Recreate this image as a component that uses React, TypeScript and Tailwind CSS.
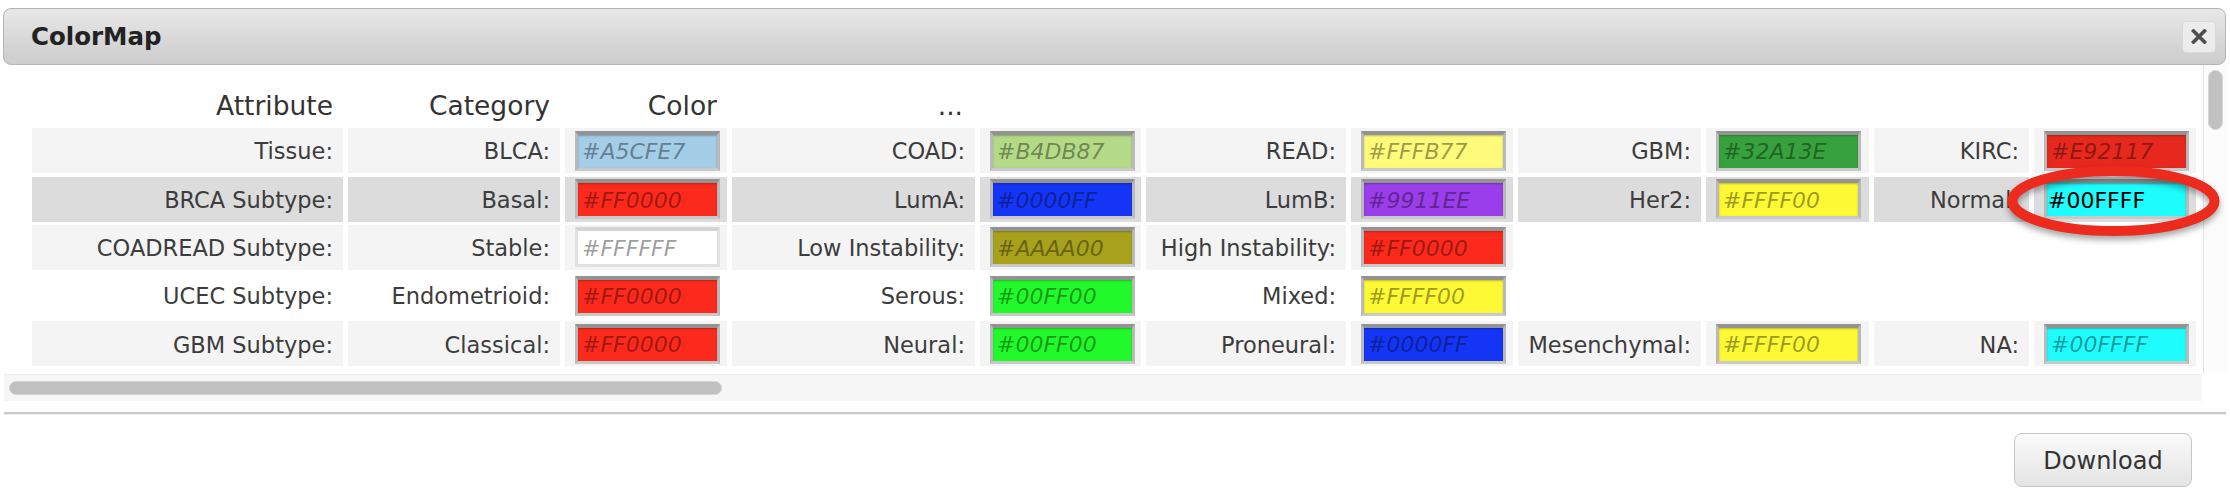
import React from "react";

type Pair = { label: string; hex: string; fill: string; typed?: boolean };
type Row = { attr: string; bg: "light" | "dark" | "none"; pairs: Pair[] };

const RED = "#fc2a1c";
const BLUE = "#1535f6";
const GREEN = "#22f92b";
const YELLOW = "#fdf934";
const CYAN = "#1ffcfd";

const rows: Row[] = [
  {
    attr: "Tissue:",
    bg: "light",
    pairs: [
      { label: "BLCA:", hex: "#A5CFE7", fill: "#a4cde8" },
      { label: "COAD:", hex: "#B4DB87", fill: "#b4da88" },
      { label: "READ:", hex: "#FFFB77", fill: "#fefb7a" },
      { label: "GBM:", hex: "#32A13E", fill: "#37a13e" },
      { label: "KIRC:", hex: "#E92117", fill: "#e6281e" },
    ],
  },
  {
    attr: "BRCA Subtype:",
    bg: "dark",
    pairs: [
      { label: "Basal:", hex: "#FF0000", fill: RED },
      { label: "LumA:", hex: "#0000FF", fill: BLUE },
      { label: "LumB:", hex: "#9911EE", fill: "#9a3deb" },
      { label: "Her2:", hex: "#FFFF00", fill: YELLOW },
      { label: "Normal:", hex: "#00FFFF", fill: CYAN, typed: true },
    ],
  },
  {
    attr: "COADREAD Subtype:",
    bg: "light",
    pairs: [
      { label: "Stable:", hex: "#FFFFFF", fill: "#ffffff" },
      { label: "Low Instability:", hex: "#AAAA00", fill: "#a8a11c" },
      { label: "High Instability:", hex: "#FF0000", fill: RED },
    ],
  },
  {
    attr: "UCEC Subtype:",
    bg: "none",
    pairs: [
      { label: "Endometrioid:", hex: "#FF0000", fill: RED },
      { label: "Serous:", hex: "#00FF00", fill: GREEN },
      { label: "Mixed:", hex: "#FFFF00", fill: YELLOW },
    ],
  },
  {
    attr: "GBM Subtype:",
    bg: "light",
    pairs: [
      { label: "Classical:", hex: "#FF0000", fill: RED },
      { label: "Neural:", hex: "#00FF00", fill: GREEN },
      { label: "Proneural:", hex: "#0000FF", fill: BLUE },
      { label: "Mesenchymal:", hex: "#FFFF00", fill: YELLOW },
      { label: "NA:", hex: "#00FFFF", fill: CYAN },
    ],
  },
];

const bgClass: Record<Row["bg"], string> = {
  light: "bg-[#f4f4f4]",
  dark: "bg-[#dcdcdc]",
  none: "",
};

const GRID =
  "grid grid-cols-[311px_212px_162px_243px_161px_200px_162px_183px_163px_155px_162px] gap-x-[5px]";

function LabelCell({ text, bg }: { text: string; bg: string }) {
  return (
    <div className={`${bg} flex items-center justify-end pr-[10px] pt-[3px] text-[22.5px] text-[#3c3c3c] whitespace-nowrap`}>
      {text}
    </div>
  );
}

function ColorCell({ pair, bg }: { pair: Pair; bg: string }) {
  const white = pair.fill === "#ffffff";
  const border = white
    ? "border-[3px] border-[#e2e2e2] border-t-[4px] border-t-[#d4d4d4]"
    : "border-[3px] border-[#b9b9b9] border-t-[4px] border-t-[#939393] border-b-[#c9c9c9] shadow-[inset_0_1px_2px_rgba(0,0,0,0.25)]";
  return (
    <div className={`${bg} flex items-center pl-[10px]`}>
      <div
        className={`w-[145px] h-[40px] ${border} flex items-center overflow-hidden`}
        style={{ backgroundColor: pair.fill }}
      >
        {pair.typed ? (
          <span className="pl-[1px] pt-[2px] text-[22px] leading-none text-black">{pair.hex}</span>
        ) : (
          <span className="pl-[4px] pt-[2px] text-[22px] leading-none italic text-black/40">{pair.hex}</span>
        )}
      </div>
    </div>
  );
}

export default function App() {
  return (
    <div
      className="relative w-[2230px] h-[498px] bg-white overflow-hidden"
      style={{ fontFamily: '"DejaVu Sans", Verdana, sans-serif' }}
    >
      <div className="pt-[8px] pl-[3px] pr-[3px]">
        {/* title bar */}
        <div className="h-[57px] mr-[1px] rounded-[8px] border border-[#b5b5b5] bg-gradient-to-b from-[#e8e8e8] to-[#cccccc] flex items-center justify-between pl-[27px] pr-[9px]">
          <span className="font-bold text-[24.5px] text-[#222] pt-[2px]">ColorMap</span>
          <div className="w-[34px] h-[32px] rounded-[4px] bg-[#ececec] border border-[#d8d8d8] flex items-center justify-center">
            <svg width="16" height="15" viewBox="0 0 16 15">
              <path d="M2.5 2 L13.5 13 M13.5 2 L2.5 13" stroke="#4d4d4d" strokeWidth="3.6" strokeLinecap="square" />
            </svg>
          </div>
        </div>

        {/* body */}
        <div className="flex h-[308px]">
          <div className="flex-1 pt-[25px] pl-[29px] flex flex-col gap-y-[3.3px]">
            <div className={`${GRID} h-[35px] text-[26.5px] leading-[31px] text-[#333]`}>
              <div className="text-right pr-[10px]">Attribute</div>
              <div className="text-right pr-[10px]">Category</div>
              <div className="text-right pr-[10px]">Color</div>
              <div className="text-right pr-[12px]">...</div>
            </div>
            {rows.map((r, i) => {
              const bg = bgClass[r.bg];
              const cells: React.ReactNode[] = [<LabelCell key="a" text={r.attr} bg={bg} />];
              for (let k = 0; k < 5; k++) {
                const p = r.pairs[k];
                if (p) {
                  cells.push(<LabelCell key={`l${k}`} text={p.label} bg={bg} />);
                  cells.push(<ColorCell key={`c${k}`} pair={p} bg={bg} />);
                } else {
                  cells.push(<div key={`l${k}`} />);
                  cells.push(<div key={`c${k}`} />);
                }
              }
              return (
                <div key={i} className={`${GRID} h-[45px]`}>
                  {cells}
                </div>
              );
            })}
          </div>
          {/* vertical scrollbar */}
          <div className="w-[24px] border-l border-[#e4e4e4] bg-[#fcfcfc] pt-[5px] pl-[4px]">
            <div className="w-[15px] h-[60px] rounded-full bg-[#c1c1c1] border border-[#d6d6d6]" />
          </div>
        </div>

        {/* horizontal scrollbar */}
        <div className="flex h-[27px] mt-[1px]">
          <div className="flex-1 ml-[1px] bg-[#f6f6f6] border-t border-[#ececec] pt-[6px] pl-[5px]">
            <div className="w-[713px] h-[14px] rounded-full bg-[#c0c0c0] border border-[#d4d4d4]" />
          </div>
          <div className="w-[25px]" />
        </div>

        {/* footer divider */}
        <div className="mt-[11px] ml-[1px] mr-[1px] h-[3px] border-t-2 border-[#c9c9c9] bg-[#ececec]" />

        {/* footer */}
        <div className="flex justify-end pr-[35px] pt-[18px]">
          <div className="w-[178px] h-[54px] rounded-[8px] border border-[#c6c6c6] bg-gradient-to-b from-[#fafafa] to-[#e4e4e4] flex items-center justify-center text-[24px] text-[#333] pt-[1px]">
            Download
          </div>
        </div>
      </div>

      {/* annotation ellipse */}
      <svg
        className="absolute left-[2000px] top-[160px] pointer-events-none"
        width="230"
        height="90"
        viewBox="0 0 230 90"
        style={{ filter: "drop-shadow(0 4px 3px rgba(0,0,0,0.35))" }}
      >
        <ellipse cx="113.5" cy="41" rx="101" ry="30" fill="none" stroke="#ec2a1e" strokeWidth="10" />
      </svg>
    </div>
  );
}
